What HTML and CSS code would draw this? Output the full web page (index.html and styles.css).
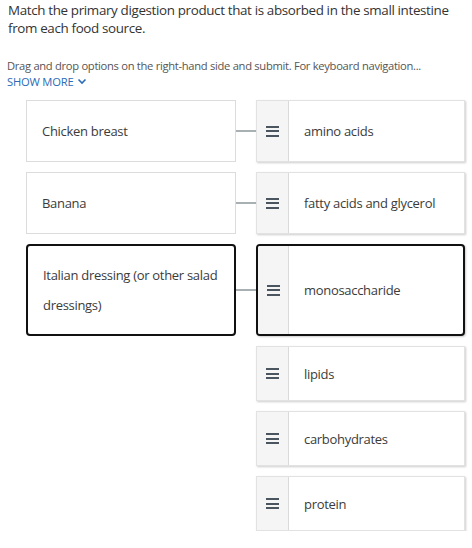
FILE: index.html
```html
<!DOCTYPE html>
<html>
<head>
<meta charset="utf-8">
<link rel="stylesheet" href="styles.css">
</head>
<body>
<div class="page">
  <p class="question">Match the primary digestion product that is absorbed in the small intestine from each food source.</p>
  <p class="hint">Drag and drop options on the right-hand side and submit. For keyboard navigation...</p>
  <a class="more">SHOW MORE <svg width="10" height="7" viewBox="0 0 10 7"><path d="M1.5 1.5 L5 5 L8.5 1.5" fill="none" stroke="#2a6cb8" stroke-width="1.6"/></svg></a>

  <div class="board">
    <div class="row">
      <div class="prompt">Chicken breast</div>
      <div class="link"></div>
      <div class="item"><span class="handle"><i></i><i></i><i></i></span><span class="label">amino acids</span></div>
    </div>
    <div class="row">
      <div class="prompt">Banana</div>
      <div class="link"></div>
      <div class="item"><span class="handle"><i></i><i></i><i></i></span><span class="label">fatty acids and glycerol</span></div>
    </div>
    <div class="row tall">
      <div class="prompt active">Italian dressing (or other salad dressings)</div>
      <div class="link"></div>
      <div class="item active"><span class="handle"><i></i><i></i><i></i></span><span class="label">monosaccharide</span></div>
    </div>
    <div class="row loose">
      <div></div><div></div>
      <div class="item"><span class="handle"><i></i><i></i><i></i></span><span class="label">lipids</span></div>
    </div>
    <div class="row loose">
      <div></div><div></div>
      <div class="item"><span class="handle"><i></i><i></i><i></i></span><span class="label">carbohydrates</span></div>
    </div>
    <div class="row loose">
      <div></div><div></div>
      <div class="item"><span class="handle"><i></i><i></i><i></i></span><span class="label">protein</span></div>
    </div>
  </div>
</div>
</body>
</html>
```

FILE: styles.css
```css
* { box-sizing: border-box; }
html, body { margin: 0; padding: 0; background: #fff; }
body {
  font-family: "Open Sans", "Noto Sans", sans-serif;
  color: #333;
}
.page { padding: 1px 8px 0 8px; }
.question {
  margin: 0;
  font-size: 13.4px;
  line-height: 18px;
  color: #333;
  letter-spacing: -0.35px;
}
.hint {
  margin: 22px 0 0 -1px;
  font-size: 11.2px;
  line-height: 14px;
  color: #555;
  letter-spacing: -0.3px;
}
.more {
  display: flex;
  width: fit-content;
  align-items: center;
  gap: 4px;
  margin: 1px 0 0 -1px;
  font-size: 11.2px;
  line-height: 15px;
  color: #2a6cb8;
  letter-spacing: -0.2px;
}
.board {
  margin: 11px 0 0 18px;
  display: flex;
  flex-direction: column;
  gap: 10px;
}
.row {
  display: grid;
  grid-template-columns: 210px 20px 209px;
  height: 62px;
}
.row.tall { height: 92px; }
.row.loose { height: 55px; }
.prompt {
  border: 1px solid #dcdcdc;
  display: flex;
  align-items: center;
  padding: 0 15px;
  font-size: 13px;
  line-height: 30px;
  color: #3b3b3b;
  letter-spacing: -0.3px;
}
.link {
  align-self: center;
  height: 2px;
  background: #a9b0b4;
}
.item {
  display: flex;
  background: #fff;
  border: 1px solid #e2e2e2;
  box-shadow: 1px 1px 2px rgba(0,0,0,0.2);
}
.prompt.active, .item.active {
  border: 2px solid #111;
  border-radius: 4px;
}
.handle {
  width: 32px;
  flex: none;
  background: #f5f5f5;
  border-right: 1px solid #dadada;
  display: flex;
  flex-direction: column;
  justify-content: center;
  align-items: center;
  gap: 2.5px;
}
.item.active .handle { width: 31px; border-radius: 2px 0 0 2px; }
.handle i {
  display: block;
  width: 13px;
  height: 2px;
  background: #4a5560;
}
.label {
  display: flex;
  align-items: center;
  padding-left: 15px;
  font-size: 13px;
  color: #3b3b3b;
  letter-spacing: -0.3px;
}
```
